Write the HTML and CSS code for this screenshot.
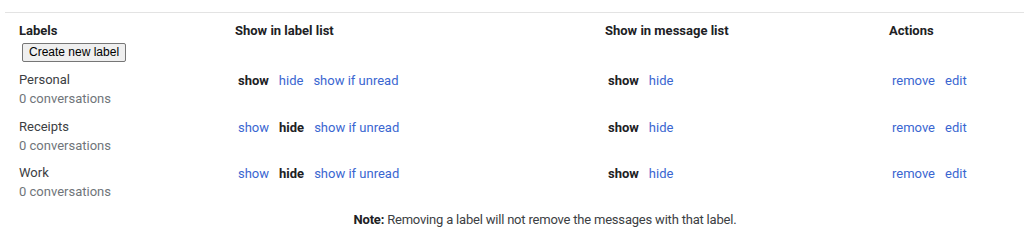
FILE: index.html
```html
<!DOCTYPE html>
<html>
<head>
<meta charset="utf-8">
<link rel="stylesheet" href="styles.css">
</head>
<body>
<div class="topbar"></div>
<div class="labels">
  <div class="head">Labels</div>
  <div class="head">Show in label list</div>
  <div class="head">Show in message list</div>
  <div class="head">Actions</div>

  <div class="btn-cell"><button class="btn">Create new label</button></div>

  <div class="name"><div class="lname">Personal</div><div class="count">0 conversations</div></div>
  <div class="opts"><b>show</b><a>hide</a><a>show if unread</a></div>
  <div class="opts"><b>show</b><a>hide</a></div>
  <div class="opts"><a>remove</a><a>edit</a></div>

  <div class="name"><div class="lname">Receipts</div><div class="count">0 conversations</div></div>
  <div class="opts"><a>show</a><b>hide</b><a>show if unread</a></div>
  <div class="opts"><b>show</b><a>hide</a></div>
  <div class="opts"><a>remove</a><a>edit</a></div>

  <div class="name"><div class="lname">Work</div><div class="count">0 conversations</div></div>
  <div class="opts"><a>show</a><b>hide</b><a>show if unread</a></div>
  <div class="opts"><b>show</b><a>hide</a></div>
  <div class="opts"><a>remove</a><a>edit</a></div>
</div>
<div class="note"><b>Note:</b> Removing a label will not remove the messages with that label.</div>
</body>
</html>
```
FILE: styles.css
```css
html, body {
  margin: 0;
  padding: 0;
  background: #fff;
}
body {
  font-family: Roboto, "Noto Sans", sans-serif;
  font-size: 13px;
  color: #202124;
}
.topbar {
  height: 12px;
  margin-left: 5px;
  border-bottom: 1px solid #e3e3e3;
}
.labels {
  display: grid;
  grid-template-columns: 216px 370px 284px 1fr;
  padding-left: 19px;
  padding-top: 8px;
}
.head {
  font-weight: 700;
  line-height: 20px;
  color: #202124;
}
.btn-cell {
  grid-column: 1 / -1;
  padding: 2px 0 8px 3px;
  line-height: 0;
}
.btn {
  font-family: "Liberation Sans", Arial, sans-serif;
  font-size: 12px;
  line-height: 15px;
  height: 19px;
  padding: 0 6px;
  margin: 0;
  background: #efefef;
  color: #000;
  border: 1px solid #767676;
  border-radius: 2px;
}
.name {
  height: 46.5px;
}
.lname {
  line-height: 19px;
  color: #3c4043;
}
.count {
  line-height: 19px;
  color: #70757a;
}
.opts {
  line-height: 19px;
  display: flex;
  gap: 10px;
  padding-left: 3px;
  padding-top: 1px;
}
.opts b {
  font-weight: 700;
  color: #202124;
}
.opts a {
  color: #3a66d1;
  cursor: pointer;
}
.note {
  padding-left: 66px;
  text-align: center;
  line-height: 19px;
  letter-spacing: -0.2px;
  color: #3c4043;
}
.note b {
  color: #202124;
}
```
